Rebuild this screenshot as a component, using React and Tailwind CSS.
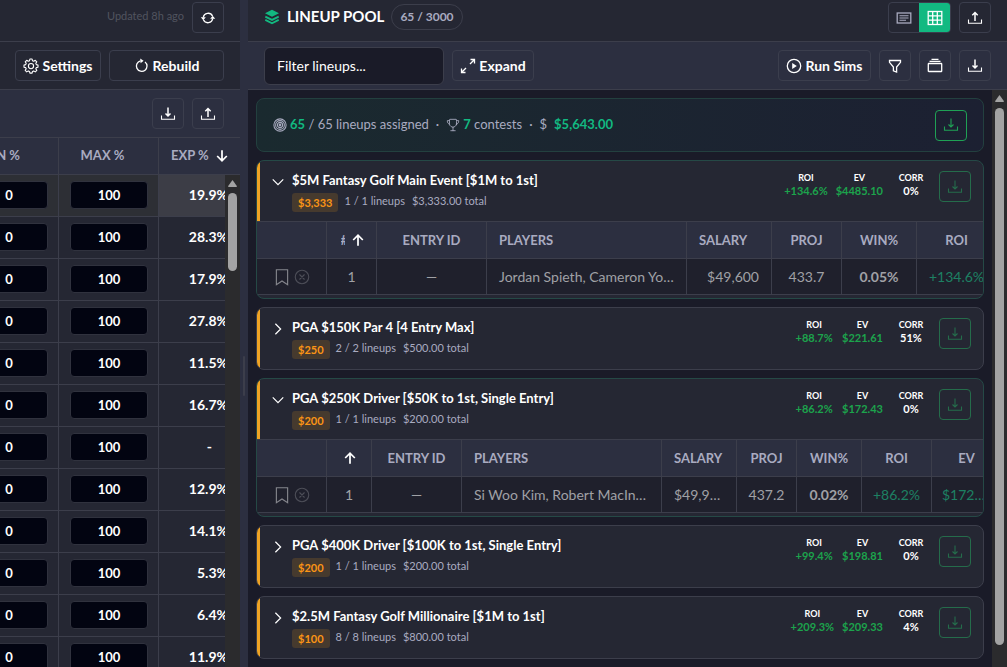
import React from "react";
import { IoCloseCircleOutline, IoTrophyOutline } from "react-icons/io5";

function Svg({ size = 16, className = "", children, width = 1.2 }) {
  return (
    <svg
      width={size}
      height={size}
      viewBox="0 0 16 16"
      fill="none"
      stroke="currentColor"
      strokeWidth={width}
      className={`shrink-0 ${className}`}
      aria-hidden="true"
    >
      {children}
    </svg>
  );
}

const DownloadIcon = ({ className, thin }) => (
  <Svg className={className}>
    <path d="M8 1.500v8.500M5.500 7.500 8 10l2.500-2.500" strokeWidth={thin ? "1.1" : "1.500"} />
    <path d="M1.500 9.500v3.800h13V9.500" strokeWidth="1.1" />
  </Svg>
);
const UploadIcon = () => (
  <Svg>
    <path d="M8 11V2.500M5.300 5.200 8 2.500l2.700 2.700" strokeWidth="1.500" />
    <path d="M1.500 9.500v3.800h13V9.500" strokeWidth="1.1" />
  </Svg>
);
const SyncIcon = () => (
  <Svg width={1.4}>
    <path d="M3.300 7.500A4.900 4.900 0 0 1 12.500 6M12.700 8.500A4.900 4.900 0 0 1 3.500 10" />
    <path d="M.8 7.200h5L3.300 10.200zM10.200 8.800h5L12.700 5.800z" fill="currentColor" stroke="none" />
  </Svg>
);
const LayersIcon = () => (
  <Svg className="text-[#12b981]" width={1.8}>
    <path d="M8 .8 15 4.300 8 7.800 1 4.300z" fill="currentColor" stroke="none" />
    <path d="M1.300 7.600 8 10.900l6.700-3.300M1.300 10.900 8 14.200l6.700-3.300" />
  </Svg>
);
const GearIcon = () => (
  <Svg width={1.1}>
    <path
      strokeLinejoin="round"
      d="M6.900 1h2.200l.4 1.800 1.200.5 1.600-1 1.500 1.500-1 1.600.5 1.200 1.700.4v2.200l-1.700.4-.5 1.200 1 1.600-1.500 1.500-1.600-1-1.200.5-.4 1.700H6.900l-.4-1.700-1.200-.5-1.600 1-1.500-1.500 1-1.600-.5-1.200L1 9.200V7l1.700-.4.5-1.200-1-1.600 1.500-1.500 1.600 1 1.200-.5z"
    />
    <circle cx="8" cy="8.100" r="2.600" />
  </Svg>
);
const ReloadIcon = () => (
  <Svg width={1.3}>
    <path d="M11 3.900a5.300 5.300 0 1 1-4.500-1" />
    <path d="M6.200.5 9.600 2.800 6.600 5.300z" fill="currentColor" stroke="none" />
  </Svg>
);
const ExpandIcon = () => (
  <Svg width={1.3}>
    <path d="M10.500 1.500h4v4M14.300 1.700 10 6M1.500 10.500v4h4M1.700 14.300 6 10" />
  </Svg>
);
const PlayIcon = () => (
  <Svg width={1.3}>
    <circle cx="8" cy="8" r="6.700" />
    <path d="M6.200 5v6l4.600-3z" fill="currentColor" stroke="none" />
  </Svg>
);
const FunnelIcon = () => (
  <Svg width={1.3}>
    <path d="M2.500 2.500h11v1.800L9.600 9v5l-3.200-1.200V9L2.500 4.300z" />
  </Svg>
);
const StackIcon = () => (
  <Svg width={1.3}>
    <rect x="1.300" y="5.500" width="13.400" height="8" rx="0.600" />
    <path d="M2.500 3.400h11M4.500 1.400h7" />
  </Svg>
);
const ListIcon = () => (
  <Svg width={1.3}>
    <rect x="1.200" y="3" width="13.600" height="10" />
    <path d="M3.500 5.800h9M3.500 8h9M3.500 10.200h6.500" strokeWidth="1.1" />
  </Svg>
);
const GridIcon = () => (
  <Svg width={1.3}>
    <rect x="1.200" y="1.500" width="13.600" height="13" />
    <path d="M5.700 1.500v13M10.300 1.500v13M1.200 5.800h13.600M1.200 10.200h13.600" />
  </Svg>
);
const TargetIcon = () => (
  <Svg size={14} width={1.2}>
    <circle cx="8" cy="8" r="7" />
    <circle cx="8" cy="8" r="5" />
    <circle cx="8" cy="8" r="3" />
    <circle cx="8" cy="8" r="1" fill="currentColor" />
  </Svg>
);
const ArrowIcon = ({ down }) => (
  <Svg size={14} width={2} className={down ? "rotate-180 text-white" : "text-white"}>
    <path d="M8 14.500V2.500M2.500 8 8 2.500 13.500 8" />
  </Svg>
);
const BookmarkIcon = () => (
  <Svg size={18} width={1}>
    <path d="M3 1.500h10v13.300L8 11.500l-5 3.300z" />
  </Svg>
);
const ChevronIcon = ({ open }) => (
  <Svg size={14} width={1.4} className="text-white">
    <path d={open ? "M2 5 8 11l6-6" : "M5 2l6 6-6 6"} />
  </Svg>
);
const ScrollCap = () => (
  <svg width="9" height="7" viewBox="0 0 9 7" fill="#a3a3a3" aria-hidden="true" className="shrink-0">
    <path d="M4.500 0 9 6.200Q9 7 8 7H1Q0 7 0 6.200z" />
  </svg>
);

function IconButton({ label, className = "border-[#3b3e4d] text-white", children }) {
  return (
    <button
      aria-label={label}
      className={`flex h-[31px] w-8 shrink-0 items-center justify-center rounded border ${className}`}
    >
      {children}
    </button>
  );
}

function TextButton({ className = "", children }) {
  return (
    <button
      className={`flex h-[31px] shrink-0 items-center justify-center gap-[3px] whitespace-nowrap rounded border border-[#3b3e4d] text-sm font-bold text-white ${className}`}
    >
      {children}
    </button>
  );
}

const exposures = ["19.9%", "28.3%", "17.9%", "27.8%", "11.5%", "16.7%", "-", "12.9%", "14.1%", "5.3%", "6.4%", "11.9%"];

function LimitInput({ label, value }) {
  return (
    <input
      aria-label={label}
      defaultValue={value}
      className="block h-7 w-[78px] rounded border border-[#30323e] bg-[#020411] text-center text-[13px] font-bold text-white"
    />
  );
}

function PlayerPanel() {
  return (
    <section className="flex w-60 shrink-0 flex-col overflow-hidden bg-[#252733]">
      <div className="flex h-[42px] shrink-0 items-start justify-end gap-2 border-b border-[#3c3e4b] pr-4 pt-[2px]">
        <span className="text-[11px] leading-7 text-[#51545f]">Updated 8h ago</span>
        <IconButton label="Refresh">
          <SyncIcon />
        </IconButton>
      </div>
      <div className="flex h-12 shrink-0 items-center justify-end gap-2 border-b border-[#3c3e4b] pr-4">
        <TextButton className="w-[86px]">
          <GearIcon /> Settings
        </TextButton>
        <TextButton className="w-[115px]">
          <ReloadIcon /> Rebuild
        </TextButton>
      </div>
      <div className="flex h-12 shrink-0 items-center justify-end gap-2 border-b border-[#3c3e4b] bg-[#2c2f40] pr-4">
        <IconButton label="Download players">
          <DownloadIcon />
        </IconButton>
        <IconButton label="Upload players">
          <UploadIcon />
        </IconButton>
      </div>
      <div className="relative flex min-h-0 flex-1 items-start justify-end overflow-hidden">
        <table className="w-[282px] shrink-0 table-fixed border-separate border-spacing-0 text-[13px] font-bold">
          <colgroup>
            <col className="w-[101px]" />
            <col className="w-[100px]" />
            <col />
          </colgroup>
          <thead className="bg-[#2c2f40] text-[#a9abc0]">
            <tr className="h-[37px]">
              <th className="border-b border-r border-[#3c3e4b] pr-4">MIN %</th>
              <th className="border-b border-r border-[#3c3e4b] pr-3">MAX %</th>
              <th className="border-b border-[#3c3e4b] pl-3">
                <span className="flex items-center justify-between pr-[11px]">
                  EXP % <ArrowIcon down />
                </span>
              </th>
            </tr>
          </thead>
          <tbody className="text-white">
            {exposures.map((exp, i) => (
              <tr key={i} className={i === 0 ? "h-[42px] bg-[#2d2f35]" : "h-[42px]"}>
                <td className="border-b border-r border-[#3c3e4b] pb-0.5 pl-3">
                  <LimitInput label={`Minimum ${i + 1}`} value="0" />
                </td>
                <td className="border-b border-r border-[#3c3e4b] pb-0.5 pl-[11px]">
                  <LimitInput label={`Maximum ${i + 1}`} value="100" />
                </td>
                <td className={`border-b border-[#3c3e4b] pb-0.5 text-right text-sm ${i === 0 ? "bg-[#3c3d46]" : ""} ${exp === "-" ? "pr-7" : "pr-3"}`}>
                  {exp}
                </td>
              </tr>
            ))}
          </tbody>
        </table>
        <div className="absolute bottom-0 right-0 top-[37px] flex w-[15px] flex-col items-center gap-1.5 bg-[#2b2b2d] pt-[5px]">
          <ScrollCap />
          <div className="h-[78px] w-[9px] rounded-full bg-[#a3a3a3]" />
        </div>
      </div>
    </section>
  );
}

const contests = [
  {
    name: "$5M Fantasy Golf Main Event [$1M to 1st]",
    fee: "$3,333", count: "1 / 1 lineups", total: "$3,333.00 total",
    roi: "+134.6%", ev: "$4485.10", corr: "0%",
    columns: [
      { label: "#", col: "w-[50px]", sort: true, value: "1" },
      { label: "ENTRY ID", col: "w-[110px]", value: "—" },
      { label: "PLAYERS", col: "w-[200px]", value: "Jordan Spieth, Cameron Young", left: true },
      { label: "SALARY", col: "w-[85px]", value: "$49,600", right: true },
      { label: "PROJ", col: "w-[70px]", value: "433.7" },
      { label: "WIN%", col: "w-[75px]", value: "0.05%", bold: true },
      { label: "ROI", col: "w-[80px]", value: "+134.6%", green: true },
    ],
  },
  {
    name: "PGA $150K Par 4 [4 Entry Max]",
    fee: "$250", count: "2 / 2 lineups", total: "$500.00 total",
    roi: "+88.7%", ev: "$221.61", corr: "51%",
  },
  {
    name: "PGA $250K Driver [$50K to 1st, Single Entry]",
    fee: "$200", count: "1 / 1 lineups", total: "$200.00 total",
    roi: "+86.2%", ev: "$172.43", corr: "0%",
    columns: [
      { label: "", col: "w-[45px]", sort: true, value: "1" },
      { label: "ENTRY ID", col: "w-[90px]", value: "—" },
      { label: "PLAYERS", col: "w-[200px]", value: "Si Woo Kim, Robert MacIntyre", left: true },
      { label: "SALARY", col: "w-[75px]", value: "$49,900", right: true },
      { label: "PROJ", col: "w-[60px]", value: "437.2" },
      { label: "WIN%", col: "w-[65px]", value: "0.02%", bold: true },
      { label: "ROI", col: "w-[70px]", value: "+86.2%", green: true },
      { label: "EV", col: "w-[70px]", value: "$172.43", green: true, edge: true },
    ],
  },
  {
    name: "PGA $400K Driver [$100K to 1st, Single Entry]",
    fee: "$200", count: "1 / 1 lineups", total: "$200.00 total",
    roi: "+99.4%", ev: "$198.81", corr: "0%",
  },
  {
    name: "$2.5M Fantasy Golf Millionaire [$1M to 1st]",
    fee: "$100", count: "8 / 8 lineups", total: "$800.00 total",
    roi: "+209.3%", ev: "$209.33", corr: "4%",
  },
];

function cellAlign(c) {
  if (c.left) return "px-3";
  if (c.edge) return "pl-2.5 pr-4";
  if (c.right) return "px-3 text-right";
  return "text-center";
}

function Stat({ label, value, color }) {
  return (
    <div className="min-w-10 pt-px text-center font-bold">
      <div className="text-[9px] leading-3 text-white">{label}</div>
      <div className={`text-[11px] leading-[14px] ${color}`}>{value}</div>
    </div>
  );
}

function LineupTable({ columns }) {
  return (
    <div className="overflow-hidden border-t border-[#3c3e4b] pb-[3px]">
      <table className="w-0 table-fixed border-separate border-spacing-0 text-sm">
        <colgroup>
          <col className="w-[70px]" />
          {columns.map((c, i) => (
            <col key={i} className={c.col} />
          ))}
        </colgroup>
        <thead className="bg-[#2c2f40] text-[13px] text-[#a9abc0]">
          <tr className="h-[37px]">
            <th aria-label="Actions" className="border-b border-r border-[#3c3e4b]" />
            {columns.map((c, i) => (
              <th
                key={i}
                className={`whitespace-nowrap border-b border-r border-[#3c3e4b] font-bold ${c.left || c.right ? "pl-3 text-left" : ""}`}
              >
                {c.sort ? (
                  <span className="flex items-center justify-center gap-1.5 pl-0.5">
                    {c.label && <span className="w-1 overflow-hidden text-left">{c.label}</span>}
                    <ArrowIcon />
                  </span>
                ) : (
                  c.label
                )}
              </th>
            ))}
          </tr>
        </thead>
        <tbody className="bg-[#1f202c] text-[#a0a1a6]">
          <tr className="h-9">
            <td className="border-b border-r border-[#3c3e4b] text-[#85868d]">
              <span className="flex items-center gap-0.5 pl-4">
                <button aria-label="Save lineup"><BookmarkIcon /></button>
                <button aria-label="Remove lineup" className="text-[#4c4d57]"><IoCloseCircleOutline size={18} /></button>
              </span>
            </td>
            {columns.map((c, i) => (
              <td
                key={i}
                className={`overflow-hidden text-ellipsis whitespace-nowrap border-b border-r border-[#3c3e4b] ${cellAlign(c)} ${c.bold ? "font-bold" : ""} ${c.green ? "text-[#1d8063]" : ""}`}
              >
                {c.value}
              </td>
            ))}
          </tr>
        </tbody>
      </table>
    </div>
  );
}

function ContestCard({ contest }) {
  const open = Boolean(contest.columns);
  return (
    <article className={`overflow-hidden rounded-lg border bg-[#252733] ${open ? "border-[#254946]" : "border-[#3c3e4b]"}`}>
      <div className={`flex items-start border-l-[3px] border-[#efa324] pl-[11px] pr-3 pt-2.5 ${open ? "h-[60px]" : "h-[61px]"}`}>
        <button aria-label={open ? "Collapse" : "Expand"} className="mr-[7px] pt-1">
          <ChevronIcon open={open} />
        </button>
        <div className="min-w-0 flex-1">
          <h2 className="truncate text-[13px] font-bold leading-[18px] text-white">{contest.name}</h2>
          <p className="mt-1 flex items-start gap-1.5 whitespace-nowrap text-[11px] leading-4 text-[#a9abc0]">
            <span className="rounded-[3px] bg-[#463a2e] px-1.5 text-[11px] font-bold leading-[19px] text-[#fb9415]">{contest.fee}</span>
            <span className="mr-px">{contest.count}</span>
            <span>{contest.total}</span>
          </p>
        </div>
        <div className="flex shrink-0 items-start gap-2">
          <Stat label="ROI" value={contest.roi} color="text-[#1ca34c]" />
          <Stat label="EV" value={contest.ev} color="text-[#1ca34c]" />
          <Stat label="CORR" value={contest.corr} color="text-white" />
          <IconButton label="Download entries" className="border-[#256c4b] text-[#256c4b]">
            <DownloadIcon thin />
          </IconButton>
        </div>
      </div>
      {open && <LineupTable columns={contest.columns} />}
    </article>
  );
}

function LineupPanel() {
  return (
    <main className="flex min-w-0 flex-1 flex-col overflow-hidden">
      <header className="flex h-[42px] shrink-0 items-start justify-between border-b border-[#3c3e4b] bg-[#252733] px-4 pt-[2px]">
        <div className="flex h-[29px] items-center gap-[7px]">
          <LayersIcon />
          <h1 className="text-[15px] font-bold text-white">LINEUP POOL</h1>
          <span className="rounded-full border border-[#3c3e4b] px-2 text-xs font-bold leading-6 text-[#a9abc0]">65 / 3000</span>
        </div>
        <div className="flex gap-2">
          <div className="flex h-[31px] overflow-hidden rounded border border-[#3b3e4d]">
            <button aria-label="List view" className="flex w-[30px] items-center justify-center text-[#a9abc0]"><ListIcon /></button>
            <button aria-label="Grid view" className="flex w-[31px] items-center justify-center bg-[#12b981] text-white"><GridIcon /></button>
          </div>
          <IconButton label="Upload lineups"><UploadIcon /></IconButton>
        </div>
      </header>
      <div className="flex h-12 shrink-0 items-center justify-between border-b border-[#3c3e4b] bg-[#2c2f40] px-4">
        <div className="flex items-center gap-2">
          <input
            aria-label="Filter lineups"
            placeholder="Filter lineups..."
            className="h-[38px] w-[180px] rounded-md border border-[#3c3e4b] bg-[#1a1b28] px-3 text-sm text-white placeholder:text-white"
          />
          <TextButton className="w-[82px]"><ExpandIcon /> Expand</TextButton>
        </div>
        <div className="flex gap-2">
          <TextButton className="w-[93px]"><PlayIcon /> Run Sims</TextButton>
          <IconButton label="Filters"><FunnelIcon /></IconButton>
          <IconButton label="Collections"><StackIcon /></IconButton>
          <IconButton label="Download lineups"><DownloadIcon /></IconButton>
        </div>
      </div>
      <div className="flex min-h-0 flex-1 bg-[#1a1b28]">
        <div className="flex min-w-0 flex-1 flex-col gap-2 overflow-hidden p-2">
          <div className="flex h-[54px] shrink-0 items-center justify-between rounded-lg border border-[#23403f] bg-linear-to-r from-[#1a2a2f] to-[#1c2032] px-4 text-[13px] text-[#a9abc0]">
            <p className="flex items-center gap-[3px] whitespace-nowrap">
              <TargetIcon />
              <span><b className="text-[#12b981]">65</b> / 65 lineups assigned</span>
              <span className="px-1">·</span>
              <IoTrophyOutline size={14} />
              <span><b className="text-[#12b981]">7</b> contests</span>
              <span className="px-1">·</span>
              <span className="mr-1">$</span>
              <b className="text-[#12b981]">$5,643.00</b>
            </p>
            <IconButton label="Download assigned" className="border-[#1fa155] text-[#1fa155]"><DownloadIcon thin /></IconButton>
          </div>
          {contests.map((contest) => (
            <div key={contest.name} className="shrink-0">
              <ContestCard contest={contest} />
            </div>
          ))}
        </div>
        <div className="flex w-[15px] shrink-0 flex-col items-center gap-1.5 bg-[#2b2b2d] pb-[22px] pt-[5px]">
          <ScrollCap />
          <div className="w-[9px] flex-1 rounded-full bg-[#a3a3a3]" />
        </div>
      </div>
    </main>
  );
}

export default function App() {
  return (
    <div className="flex h-screen overflow-hidden bg-[#1a1b28] font-[Lato,sans-serif]">
      <PlayerPanel />
      <div className="flex w-2 shrink-0 items-center bg-[#2c2f40]">
        <div className="ml-[3px] mt-[84px] h-10 w-0.5 rounded bg-[#3c3e4b]" />
      </div>
      <LineupPanel />
    </div>
  );
}
